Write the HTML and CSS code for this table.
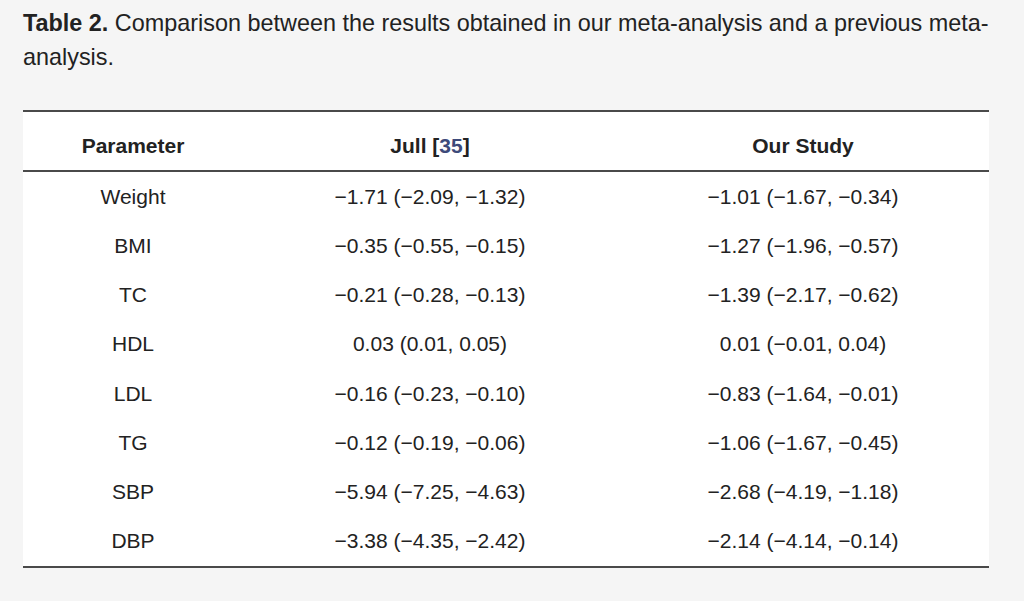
FILE: index.html
```html
<!DOCTYPE html>
<html lang="en">
<head>
<meta charset="utf-8">
<title>Table 2</title>
<link rel="stylesheet" href="styles.css">
</head>
<body>
<div class="page">
  <p class="caption"><b>Table 2.</b> Comparison between the results obtained in our meta-analysis and a previous meta-analysis.</p>
  <table class="data">
    <colgroup>
      <col class="c1"><col class="c2"><col class="c3">
    </colgroup>
    <thead>
      <tr><th>Parameter</th><th>Jull [<a class="ref" href="#">35</a>]</th><th>Our Study</th></tr>
    </thead>
    <tbody>
      <tr><td>Weight</td><td>−1.71 (−2.09, −1.32)</td><td>−1.01 (−1.67, −0.34)</td></tr>
      <tr><td>BMI</td><td>−0.35 (−0.55, −0.15)</td><td>−1.27 (−1.96, −0.57)</td></tr>
      <tr><td>TC</td><td>−0.21 (−0.28, −0.13)</td><td>−1.39 (−2.17, −0.62)</td></tr>
      <tr><td>HDL</td><td>0.03 (0.01, 0.05)</td><td>0.01 (−0.01, 0.04)</td></tr>
      <tr><td>LDL</td><td>−0.16 (−0.23, −0.10)</td><td>−0.83 (−1.64, −0.01)</td></tr>
      <tr><td>TG</td><td>−0.12 (−0.19, −0.06)</td><td>−1.06 (−1.67, −0.45)</td></tr>
      <tr><td>SBP</td><td>−5.94 (−7.25, −4.63)</td><td>−2.68 (−4.19, −1.18)</td></tr>
      <tr><td>DBP</td><td>−3.38 (−4.35, −2.42)</td><td>−2.14 (−4.14, −0.14)</td></tr>
    </tbody>
  </table>
</div>
</body>
</html>
```
FILE: styles.css
```css
html, body {
  margin: 0;
  padding: 0;
  background: #f5f5f5;
}
.page {
  padding: 6px 23px 0 23px;
  font-family: "Liberation Sans", Arial, sans-serif;
  color: #222;
}
.caption {
  margin: 0;
  font-size: 23.4px;
  line-height: 34px;
}
.caption b {
  font-weight: bold;
}
.data {
  margin-top: 36px;
  width: 966px;
  border-collapse: separate;
  border-spacing: 0;
  background: #fff;
  border-top: 2px solid #4a4a4a;
  border-bottom: 2px solid #4a4a4a;
  table-layout: fixed;
  font-size: 21px;
}
.c1 { width: 220px; }
.c2 { width: 374px; }
.c3 { width: 372px; }
.data th {
  height: 48px;
  padding: 10px 0 0 0;
  font-weight: bold;
  text-align: center;
  border-bottom: 2px solid #4a4a4a;
}
.data td {
  height: 49.25px;
  padding: 0;
  text-align: center;
}
.ref {
  color: #3d4a7a;
  text-decoration: none;
}
```
